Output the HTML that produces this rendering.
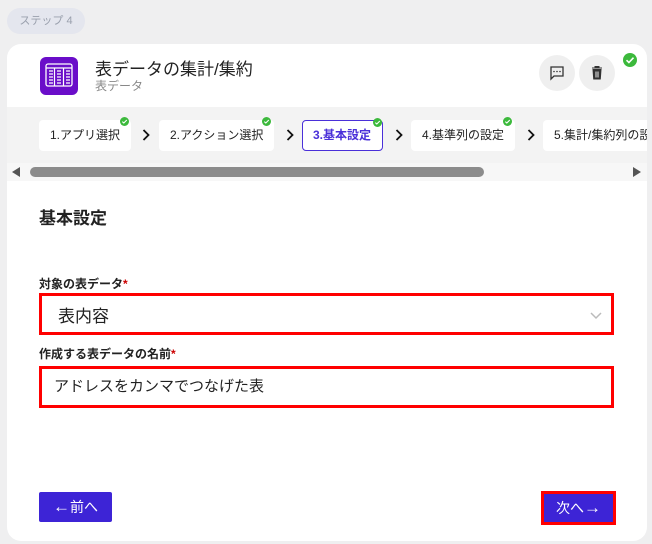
<!DOCTYPE html>
<html><head><meta charset="utf-8"><style>
*{margin:0;padding:0;box-sizing:border-box}
body{width:652px;height:544px;background:#efeff0;font-family:"Liberation Sans","Noto Sans CJK JP",sans-serif;position:relative;overflow:hidden;color:#222}
.abs{position:absolute}
.pill{left:7px;top:8px;width:78px;height:26px;border-radius:13px;background:#e4e6ee;color:#9aa0ad;font-size:11px;line-height:26px;text-align:center}
.card{left:7px;top:44px;width:640px;height:497px;background:#fff;border-radius:14px;overflow:hidden}
.band{left:0;top:63px;width:640px;height:56px;background:#f3f3f3}
.step{top:13px;height:31px;background:#fff;border-radius:4px;font-size:12px;line-height:31px;padding-left:11px;white-space:nowrap;color:#222}
.ck{width:9px;height:9px;top:-3px}
.arr{top:22px}
.lbl{font-size:12px;font-weight:bold;color:#222}
.lbl span{color:#c00}
.box{border:3px solid #f00;background:#fff}
.btn{background:#3d24d6;color:#fff;font-size:14px;text-align:center}
</style></head><body>
<div class="abs pill">ステップ 4</div>
<div class="abs card">
  <div class="abs" style="left:33px;top:13px;width:38px;height:38px;border-radius:6px;background:#6a0dc9">
    <svg width="38" height="38" viewBox="0 0 38 38"><rect x="6" y="7" width="26" height="22" rx="2" fill="none" stroke="#fff" stroke-width="1.3"/><line x1="6" y1="11" x2="32" y2="11" stroke="#fff" stroke-width="1.2"/><line x1="14.5" y1="11" x2="14.5" y2="29" stroke="#fff" stroke-width="1.2"/><line x1="23.5" y1="11" x2="23.5" y2="29" stroke="#fff" stroke-width="1.2"/><g stroke="#fff" stroke-width="1.2"><path d="M9 14h4M9 17h4M9 20h4M9 23h4M9 26h4M17 14h4M17 17h4M17 20h4M17 23h4M17 26h4M26 14h4M26 17h4M26 20h4M26 23h4M26 26h4"/></g></svg>
  </div>
  <div class="abs" style="left:88px;top:14px;font-size:17px;line-height:24px;color:#222">表データの集計/集約</div>
  <div class="abs" style="left:88px;top:35px;font-size:12px;line-height:14px;color:#888">表データ</div>
  <div class="abs" style="left:532px;top:11px;width:36px;height:36px;border-radius:50%;background:#efefef"><svg width="36" height="36"><path d="M12 12h12v9h-9l-3 3z" fill="none" stroke="#333" stroke-width="1.3"/><circle cx="15" cy="16.5" r=".8" fill="#333"/><circle cx="18" cy="16.5" r=".8" fill="#333"/><circle cx="21" cy="16.5" r=".8" fill="#333"/></svg></div>
  <div class="abs" style="left:572px;top:11px;width:36px;height:36px;border-radius:50%;background:#efefef"><svg width="36" height="36"><path d="M13 13h10M16 13v-1.5h4V13M14 14.5h8l-.7 9.5h-6.6z" fill="#333" stroke="#333" stroke-width="1"/><path d="M17 16.5v6M19 16.5v6" stroke="#efefef" stroke-width="1"/></svg></div>
  <div class="abs" style="left:616px;top:9px;width:14px;height:14px;border-radius:50%;background:#3cb93c"><svg width="14" height="14"><path d="M3.5 7.2l2.4 2.3 4.6-4.8" fill="none" stroke="#fff" stroke-width="1.6"/></svg></div>
  <div class="abs band">
    <div class="abs step" style="left:32px;width:92px">1.アプリ選択<svg class="abs ck" style="left:81px" viewBox="0 0 9 9"><circle cx="4.5" cy="4.5" r="4.5" fill="#3cb93c"/><path d="M2.3 4.6l1.5 1.4 3-3" fill="none" stroke="#fff" stroke-width="1.1"/></svg></div>
    <svg class="abs arr" style="left:135px" width="8" height="12"><path d="M1.5 1l5 5-5 5" fill="none" stroke="#111" stroke-width="1.8"/></svg>
    <div class="abs step" style="left:152px;width:115px">2.アクション選択<svg class="abs ck" style="left:103px" viewBox="0 0 9 9"><circle cx="4.5" cy="4.5" r="4.5" fill="#3cb93c"/><path d="M2.3 4.6l1.5 1.4 3-3" fill="none" stroke="#fff" stroke-width="1.1"/></svg></div>
    <svg class="abs arr" style="left:279px" width="8" height="12"><path d="M1.5 1l5 5-5 5" fill="none" stroke="#111" stroke-width="1.8"/></svg>
    <div class="abs step" style="left:295px;width:81px;border:1px solid #4a30d9;color:#4a30d9;font-weight:bold;line-height:29px;padding-left:10px">3.基本設定<svg class="abs ck" style="left:70px" viewBox="0 0 9 9"><circle cx="4.5" cy="4.5" r="4.5" fill="#3cb93c"/><path d="M2.3 4.6l1.5 1.4 3-3" fill="none" stroke="#fff" stroke-width="1.1"/></svg></div>
    <svg class="abs arr" style="left:388px" width="8" height="12"><path d="M1.5 1l5 5-5 5" fill="none" stroke="#111" stroke-width="1.8"/></svg>
    <div class="abs step" style="left:404px;width:104px">4.基準列の設定<svg class="abs ck" style="left:92px" viewBox="0 0 9 9"><circle cx="4.5" cy="4.5" r="4.5" fill="#3cb93c"/><path d="M2.3 4.6l1.5 1.4 3-3" fill="none" stroke="#fff" stroke-width="1.1"/></svg></div>
    <svg class="abs arr" style="left:520px" width="8" height="12"><path d="M1.5 1l5 5-5 5" fill="none" stroke="#111" stroke-width="1.8"/></svg>
    <div class="abs step" style="left:536px;width:120px">5.集計/集約列の設定</div>
  </div>
  <div class="abs" style="left:0;top:119px;width:640px;height:18px;background:#f7f7f7">
    <svg class="abs" style="left:5px;top:4px" width="8" height="10"><path d="M8 0v10L0 5z" fill="#555"/></svg>
    <div class="abs" style="left:23px;top:4px;width:454px;height:10px;border-radius:5px;background:#8c8c8c"></div>
    <svg class="abs" style="left:626px;top:4px" width="8" height="10"><path d="M0 0v10L8 5z" fill="#555"/></svg>
  </div>
  <div class="abs" style="left:32px;top:160px;font-size:17px;font-weight:bold">基本設定</div>
  <div class="abs lbl" style="left:32px;top:231px">対象の表データ<span>*</span></div>
  <div class="abs box" style="left:32px;top:249px;width:575px;height:42px;font-size:17px;line-height:42px;padding-left:16px">表内容
    <svg class="abs" style="left:548px;top:16px" width="12" height="8"><path d="M1 1l5 5 5-5" fill="none" stroke="#bbb" stroke-width="1.5"/></svg></div>
  <div class="abs lbl" style="left:32px;top:301px">作成する表データの名前<span>*</span></div>
  <div class="abs box" style="left:32px;top:322px;width:575px;height:42px;font-size:15px;line-height:36px;padding-left:12px">アドレスをカンマでつなげた表</div>
  <div class="abs btn" style="left:32px;top:448px;width:73px;height:30px;line-height:30px;border-radius:2px"><span style="font-size:17px">←</span>前へ</div>
  <div class="abs" style="left:534px;top:447px;width:75px;height:34px;border:3px solid #f00;background:#3d24d6;color:#fff;font-size:14px;text-align:center;line-height:28px">次へ<span style="font-size:17px">→</span></div>
</div>
</body></html>
